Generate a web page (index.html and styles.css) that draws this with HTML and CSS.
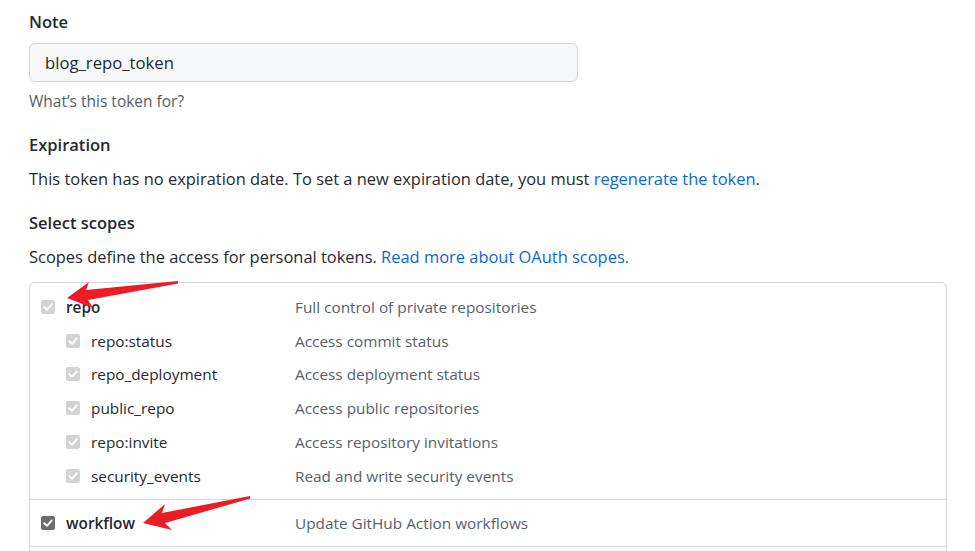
FILE: index.html
```html
<!DOCTYPE html>
<html>
<head>
<meta charset="utf-8">
<link rel="stylesheet" href="styles.css">
</head>
<body>
<div class="page">
  <div class="section">
    <div class="label">Note</div>
    <div class="input">blog_repo_token</div>
    <div class="hint">What’s this token for?</div>
  </div>
  <div class="section exp">
    <div class="label">Expiration</div>
    <p class="text">This token has no expiration date. To set a new expiration date, you must <a href="#">regenerate the token</a>.</p>
  </div>
  <div class="section scopes">
    <div class="label">Select scopes</div>
    <p class="text">Scopes define the access for personal tokens. <a href="#">Read more about OAuth scopes.</a></p>
  </div>
  <div class="box">
    <div class="group">
      <div class="row"><span class="name main"><span class="cb disabled"><svg viewBox="0 0 14 14"><path d="M3.2 7.2 L6 9.8 L10.8 4.4"/></svg></span>repo</span><span class="desc">Full control of private repositories</span></div>
      <div class="row sub"><span class="name"><span class="cb disabled"><svg viewBox="0 0 14 14"><path d="M3.2 7.2 L6 9.8 L10.8 4.4"/></svg></span>repo:status</span><span class="desc">Access commit status</span></div>
      <div class="row sub"><span class="name"><span class="cb disabled"><svg viewBox="0 0 14 14"><path d="M3.2 7.2 L6 9.8 L10.8 4.4"/></svg></span>repo_deployment</span><span class="desc">Access deployment status</span></div>
      <div class="row sub"><span class="name"><span class="cb disabled"><svg viewBox="0 0 14 14"><path d="M3.2 7.2 L6 9.8 L10.8 4.4"/></svg></span>public_repo</span><span class="desc">Access public repositories</span></div>
      <div class="row sub"><span class="name"><span class="cb disabled"><svg viewBox="0 0 14 14"><path d="M3.2 7.2 L6 9.8 L10.8 4.4"/></svg></span>repo:invite</span><span class="desc">Access repository invitations</span></div>
      <div class="row sub"><span class="name"><span class="cb disabled"><svg viewBox="0 0 14 14"><path d="M3.2 7.2 L6 9.8 L10.8 4.4"/></svg></span>security_events</span><span class="desc">Read and write security events</span></div>
    </div>
    <div class="group">
      <div class="row"><span class="name main"><span class="cb checked"><svg viewBox="0 0 14 14"><path d="M3.2 7.2 L6 9.8 L10.8 4.4"/></svg></span>workflow</span><span class="desc">Update GitHub Action workflows</span></div>
    </div>
    <div class="group rest"></div>
  </div>
</div>
<svg class="arrows" width="975" height="551" viewBox="0 0 975 551">
  <polygon points="67,298 89,282 86,290 178,281 178,283.5 88,300 93,308"/>
  <polygon points="143,523 165,504 162,513 250,496 250.3,498.5 165,523 172,530"/>
</svg>
</body>
</html>
```

FILE: styles.css
```css
html, body {
  margin: 0;
  padding: 0;
  background: #ffffff;
  overflow: hidden;
}
body {
  font-family: "Open Sans", "Noto Sans", sans-serif;
  color: #24292f;
  font-size: 16.45px;
  position: relative;
  width: 975px;
  height: 551px;
}
.page {
  padding: 10px 0 0 29px;
}
.label {
  font-weight: 600;
  font-size: 16.5px;
  line-height: 24px;
}
.input {
  margin-top: 9px;
  width: 532px;
  height: 37px;
  line-height: 37px;
  padding: 0 0 0 15px;
  background: #f6f8fa;
  border: 1px solid #d0d7de;
  border-radius: 6px;
  font-size: 16.7px;
}
.hint {
  margin-top: 8px;
  font-size: 15.5px;
  line-height: 22px;
  color: #57606a;
}
.exp {
  margin-top: 21px;
}
.text {
  margin: 10px 0 0;
  line-height: 24px;
}
a {
  color: #0969da;
  text-decoration: none;
}
.scopes {
  margin-top: 20px;
}
.box {
  margin-top: 13px;
  width: 916px;
  border: 1px solid #d0d7de;
  border-radius: 6px;
}
.group {
  padding: 6px 0;
  border-bottom: 1px solid #d0d7de;
}
.group:first-child {
  padding-top: 7px;
}
.group.rest {
  height: 60px;
  border-bottom: none;
}
.row {
  display: flex;
  align-items: center;
  height: 33.8px;
  padding-left: 11px;
  font-size: 15.35px;
}
.name {
  display: flex;
  align-items: center;
  width: 254px;
  flex: none;
}
.row.sub .name {
  padding-left: 25px;
  width: 229px;
}
.main {
  font-weight: 600;
}
.desc {
  color: #57606a;
}
.cb {
  width: 14px;
  height: 14px;
  border-radius: 2px;
  margin-right: 11px;
  flex: none;
  box-sizing: border-box;
  border: 1px solid #767676;
  background: #fff;
}
.cb svg {
  display: block;
  width: 14px;
  height: 14px;
  margin: -1px;
}
.cb path {
  fill: none;
  stroke: #fff;
  stroke-width: 2;
  stroke-linecap: round;
  stroke-linejoin: round;
}
.cb.disabled {
  background: #d3d3d3;
  border-color: #d3d3d3;
}
.cb.checked {
  background: #6b6b6b;
  border-color: #6b6b6b;
}
.arrows {
  position: absolute;
  left: 0;
  top: 0;
  pointer-events: none;
}
.arrows polygon {
  fill: #ec1c24;
}
```
